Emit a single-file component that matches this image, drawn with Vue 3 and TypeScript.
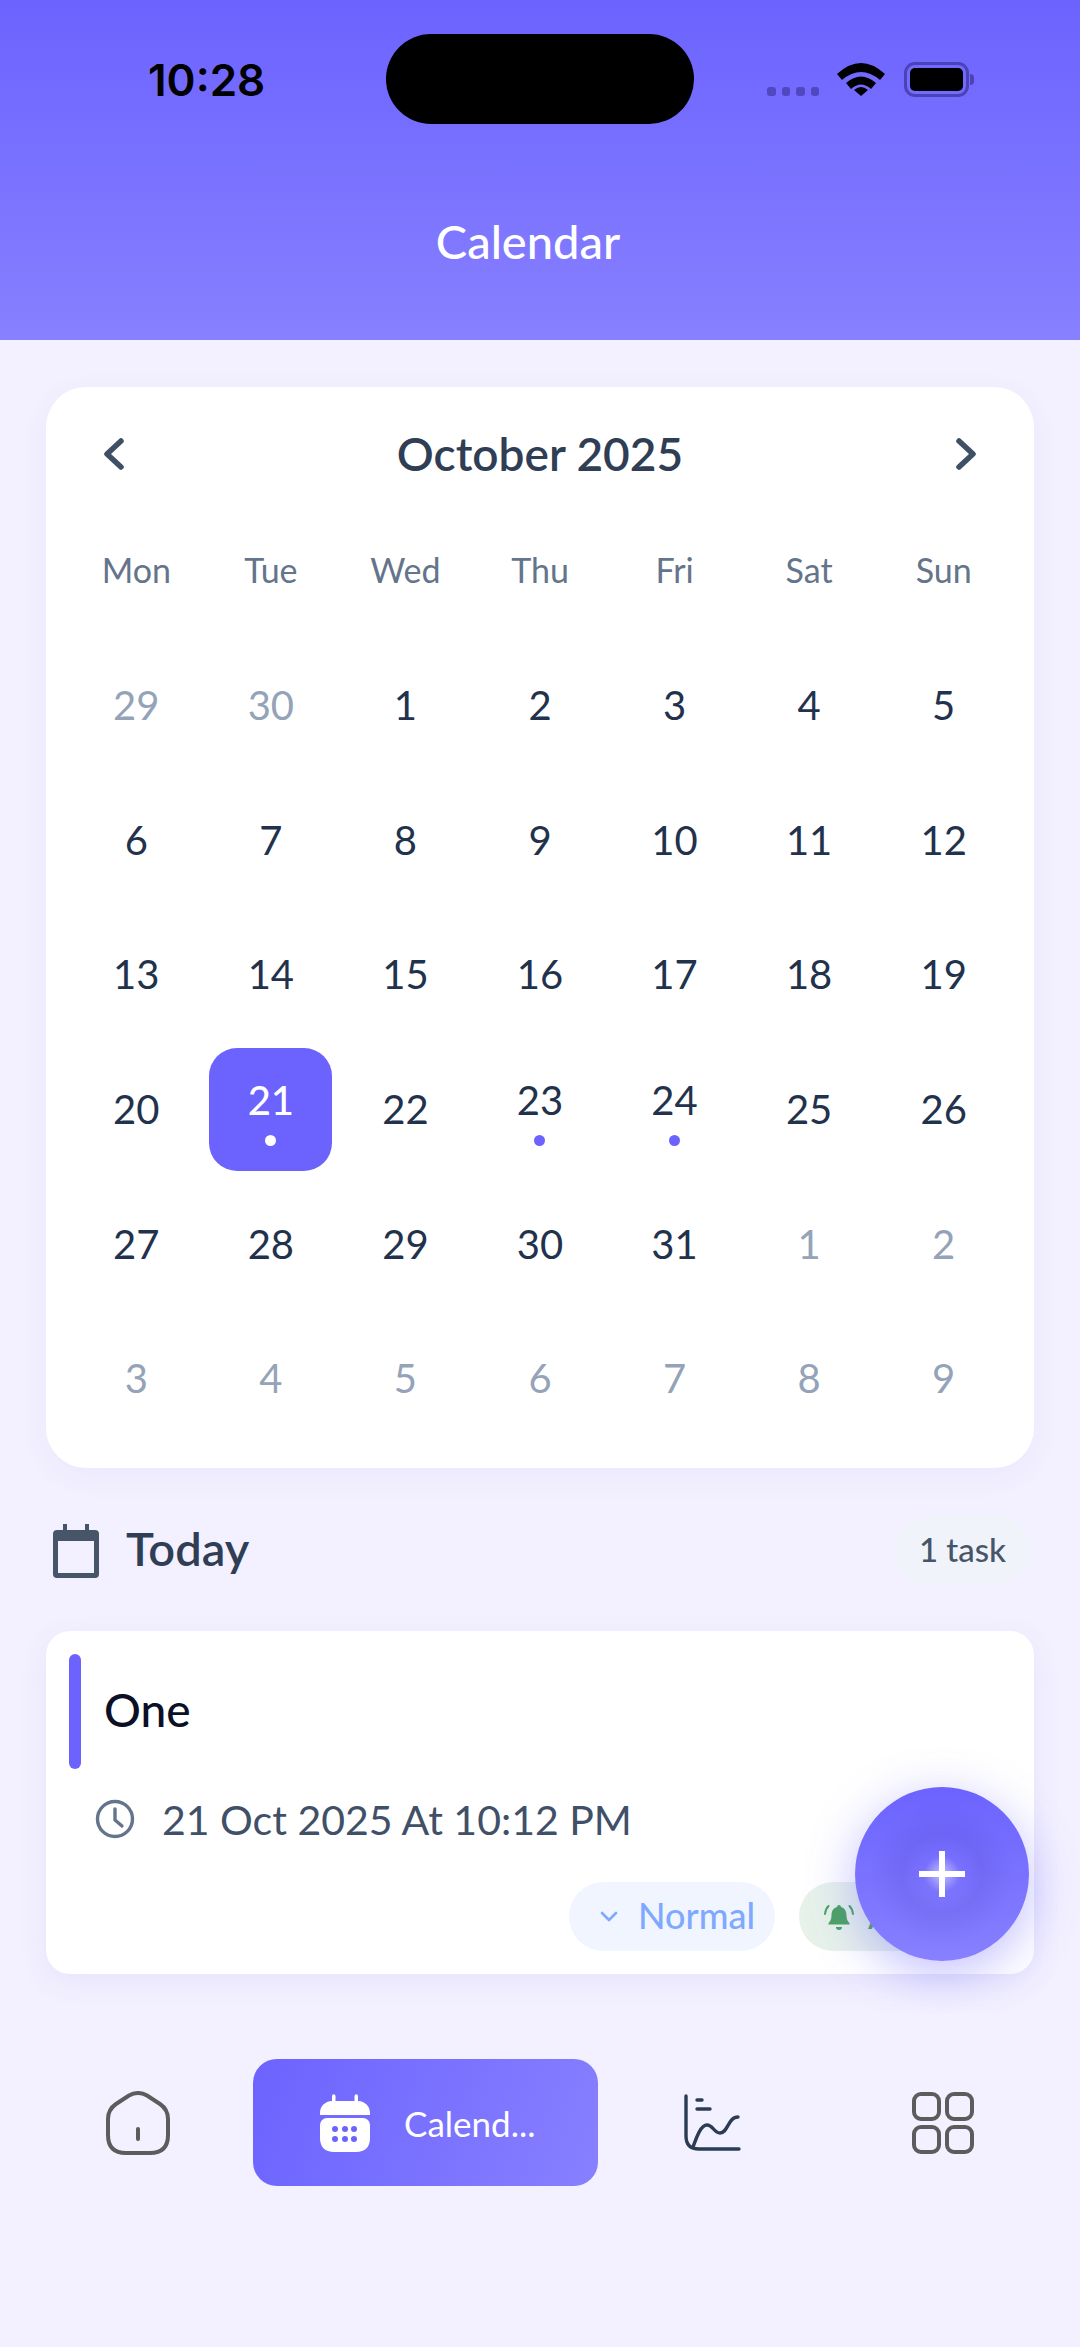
<script setup lang="ts">
interface Day { n: number; muted?: boolean; dot?: boolean; sel?: boolean }
const weekdays = ['Mon', 'Tue', 'Wed', 'Thu', 'Fri', 'Sat', 'Sun']
const days: Day[] = []
for (const n of [29, 30]) days.push({ n, muted: true })
for (let n = 1; n <= 31; n++) days.push({ n, dot: n === 21 || n === 23 || n === 24, sel: n === 21 })
for (let n = 1; n <= 9; n++) days.push({ n, muted: true })
</script>

<template>
  <div class="page">
    <header class="header">
      <div class="status">
        <span class="time">10:28</span>
        <div class="island"></div>
        <div class="sysicons">
          <div class="dots"><i></i><i></i><i></i><i></i></div>
          <svg class="wifi" width="48" height="34" viewBox="0 0 48 34">
            <path d="M0 12 Q24 -10 48 12 L43 18 Q24 2 5 18Z" fill="#000"/>
            <path d="M9 21 Q24 8 39 21 L34 27 Q24 18 14 27Z" fill="#000"/>
            <path d="M17 29 Q24 23 31 29 L24 35Z" fill="#000" transform="translate(0 -1)"/>
          </svg>
          <div class="battery"><div class="cell"></div></div>
          <div class="nub"></div>
        </div>
      </div>
      <h1 class="title">Calendar</h1>
    </header>

    <main class="scroll">
      <section class="calendar">
        <div class="cal-head">
          <svg width="28" height="36" viewBox="0 0 28 36" fill="none" stroke="#3f4f66" stroke-width="5.500" stroke-linecap="round" stroke-linejoin="round"><path d="M21 5 L7 18 L21 31"/></svg>
          <h2 class="month">October 2025</h2>
          <svg width="28" height="36" viewBox="0 0 28 36" fill="none" stroke="#3f4f66" stroke-width="5.500" stroke-linecap="round" stroke-linejoin="round"><path d="M7 5 L21 18 L7 31"/></svg>
        </div>
        <div class="grid">
          <div v-for="w in weekdays" :key="w" class="wd">{{ w }}</div>
          <div v-for="(d, i) in days" :key="i" class="cell-day">
            <div class="day" :class="{ muted: d.muted, sel: d.sel }">
              <span>{{ d.n }}</span>
              <i v-if="d.dot" class="mark"></i>
            </div>
          </div>
        </div>
      </section>

      <div class="today-row">
        <svg class="today-ic" width="50" height="54" viewBox="0 0 50 54">
          <path d="M12 0h4v6h18V0h4v6h6a4 4 0 0 1 4 4v40a4 4 0 0 1-4 4H6a4 4 0 0 1-4-4V10a4 4 0 0 1 4-4h6zM7 17v32h36V17z" fill="#475569" fill-rule="evenodd"/>
        </svg>
        <span class="today">Today</span>
        <span class="count">1 task</span>
      </div>

      <article class="task">
        <div class="task-top">
          <div class="bar"></div>
          <span class="task-name">One</span>
        </div>
        <div class="when">
          <svg width="40" height="40" viewBox="0 0 40 40" fill="none" stroke="#64748b" stroke-width="3.4" stroke-linecap="round" stroke-linejoin="round"><circle cx="20" cy="20" r="17.5"/><path d="M20 10v11l7 6"/></svg>
          <span>21 Oct 2025 At 10:12 PM</span>
        </div>
        <div class="pills">
          <div class="pill normal">
            <svg width="18" height="12" viewBox="0 0 18 12" fill="none" stroke="#7fa9ff" stroke-width="2.6" stroke-linecap="round" stroke-linejoin="round"><path d="M2 2l7 7 7-7"/></svg>
            <span>Normal</span>
          </div>
          <div class="pill alarm">
            <svg width="30" height="30" viewBox="0 0 30 30">
              <path d="M15 3a2 2 0 0 1 2 2c4 1 5.500 4.500 5.500 8.500 0 4 1.500 6 3 7.500v1.500h-21V21c1.500-1.500 3-3.500 3-7.500S9 6 13 5a2 2 0 0 1 2-2z" fill="#4ba35f"/>
              <path d="M12 25h6a3 3 0 0 1-6 0z" fill="#4ba35f"/>
              <path d="M4.500 4Q1.500 7 1 12M25.500 4Q28.500 7 29 12" stroke="#4ba35f" stroke-width="2" fill="none" stroke-linecap="round"/>
            </svg>
            <span>Alarm</span>
          </div>
        </div>
      </article>
      <button class="fab" aria-label="Add">
        <svg width="46" height="46" viewBox="0 0 46 46" fill="none" stroke="#fff" stroke-width="6"><path d="M23 0v46M0 23h46"/></svg>
      </button>
    </main>

    <nav class="nav">
      <div class="nav-item home">
        <svg width="64" height="64" viewBox="0 0 64 64" fill="none" stroke="#5c5c5c" stroke-width="4" stroke-linecap="round" stroke-linejoin="round">
          <path d="M23 4.500 Q32 -0.500 41 4.500 L54 13 Q62 18.500 62 28 V44 Q62 62 44 62 H20 Q2 62 2 44 V28 Q2 18.500 10 13Z"/>
          <path d="M32 38v10"/>
        </svg>
      </div>
      <div class="nav-item active">
        <svg width="50" height="58" viewBox="0 0 50 58">
          <path d="M12 2a1.500 1.500 0 0 1 3.500 0v5h19V2a1.500 1.500 0 0 1 3.500 0v5c7 .5 12 5 12 12v2H0v-2C0 12 5 7.500 12 7z" fill="#fff"/>
          <path d="M0 31a7 7 0 0 1 7-7h36a7 7 0 0 1 7 7v13c0 9-5 14-14 14H14C5 58 0 53 0 44z" fill="#fff"/>
          <g fill="#6c63ff"><circle cx="15" cy="35" r="3"/><circle cx="25" cy="35" r="3"/><circle cx="34" cy="35" r="3"/><circle cx="15" cy="45" r="3"/><circle cx="25" cy="45" r="3"/><circle cx="34" cy="45" r="3"/></g>
        </svg>
        <span>Calend...</span>
      </div>
      <div class="nav-item">
        <svg width="58" height="58" viewBox="0 0 58 58" fill="none" stroke="#2b3c55" stroke-width="3.400" stroke-linecap="round" stroke-linejoin="round">
          <path d="M2 2V42Q2 55 15 55H55"/>
          <path d="M9 53C13 42 17 31 23 31C29 31 30 39 36 39C44 39 44 23 54 23"/>
          <path d="M13 6h5M13 15h13"/>
        </svg>
      </div>
      <div class="nav-item">
        <svg width="62" height="62" viewBox="0 0 62 62" fill="none" stroke="#5c5c5c" stroke-width="4">
          <rect x="2" y="2" width="25" height="25" rx="7"/><rect x="35" y="2" width="25" height="25" rx="7"/>
          <rect x="2" y="35" width="25" height="25" rx="7"/><rect x="35" y="35" width="25" height="25" rx="7"/>
        </svg>
      </div>
    </nav>
  </div>
</template>

<style>
html, body { margin: 0; background: #f3f1ff; }
</style>

<style scoped>
.page {
  width: 1080px;
  height: 2347px;
  background: #f3f1ff;
  font-family: "Lato", "Noto Sans", sans-serif;
  overflow: hidden;
  display: flex;
  flex-direction: column;
}
.header {
  height: 340px;
  box-sizing: border-box;
  background: linear-gradient(180deg, #6c63ff, #8780ff);
  display: flex;
  flex-direction: column;
  align-items: center;
}
.status {
  width: 100%;
  height: 124px;
  margin-top: 34px;
  box-sizing: border-box;
  padding-left: 148px;
  display: flex;
  align-items: flex-start;
}
.time {
  font-family: "Inter", sans-serif;
  font-weight: 600;
  font-size: 44px;
  line-height: 46px;
  margin-top: 23px;
  width: 238px;
  color: #000;
}
.island { width: 308px; height: 90px; border-radius: 45px; background: #000; }
.sysicons { display: flex; align-items: flex-start; margin-left: 73px; margin-top: 28px; }
.dots { display: flex; gap: 6px; margin-top: 25px; margin-right: 18px; }
.dots i { width: 8.500px; height: 9px; border-radius: 3px; background: #4f48c0; }
.wifi { margin-right: 19px; }
.battery { width: 65px; height: 35px; box-sizing: border-box; border: 3px solid #4a43b5; border-radius: 11px; padding: 3px; }
.cell { height: 100%; background: #000; border-radius: 5px; }
.nub { width: 4px; height: 11px; margin-top: 12px; margin-left: 1px; background: #4a43b5; border-radius: 0 4px 4px 0; }
.title {
  margin: 58px 0 0 -24px;
  font-size: 47px;
  line-height: 50px;
  font-weight: 500;
  color: #fff;
}
.scroll {
  position: relative;
  height: 1673px;
  padding: 47px 46px 0;
  box-sizing: border-box;
  overflow: hidden;
}
.calendar {
  height: 1081px;
  box-sizing: border-box;
  background: #fff;
  border-radius: 40px;
  padding: 45px 23px 0;
  box-shadow: 0 8px 30px rgba(90, 80, 200, 0.06);
}
.cal-head {
  display: flex;
  justify-content: space-between;
  align-items: center;
  height: 44px;
  padding: 0 31px;
}
.month { margin: 0; font-size: 46px; line-height: 44px; font-weight: 600; color: #2f3e55; }
.grid {
  margin-top: 27px;
  display: grid;
  grid-template-columns: repeat(7, 1fr);
  grid-auto-rows: 134.700px;
}
.wd {
  grid-row: 1;
  height: 134.700px;
  display: flex;
  align-items: flex-start;
  justify-content: center;
  padding-top: 46px;
  box-sizing: border-box;
  font-size: 34px;
  line-height: 42px;
  color: #64748b;
}
.cell-day { display: flex; align-items: center; justify-content: center; }
.day {
  width: 123px;
  height: 123px;
  border-radius: 28px;
  display: flex;
  flex-direction: column;
  align-items: center;
  justify-content: center;
  position: relative;
  font-size: 40px;
  line-height: 46px;
  color: #22324c;
}
.day.muted { color: #94a3b8; }
.day.sel { background: #6c63ff; color: #fff; font-weight: 500; }
.mark {
  width: 11px;
  height: 11px;
  border-radius: 50%;
  background: #6c63ff;
  margin-top: 12px;
  margin-bottom: -4px;
}
.sel .mark { background: #fff; }
.today-row {
  display: flex;
  align-items: center;
  height: 69px;
  margin-top: 48px;
  padding-left: 5px;
}
.today-ic { margin-right: 25px; }
.today { font-size: 47px; font-weight: 600; color: #2f3e55; flex: 1; margin-top: -5px; }
.count {
  width: 135px;
  height: 69px;
  line-height: 66px;
  text-align: center;
  font-size: 33px;
  font-weight: 500;
  color: #475569;
  background: #f1f3fb;
  border-radius: 34px;
  margin-right: 4px;
}
.task {
  margin-top: 46px;
  height: 343px;
  box-sizing: border-box;
  background: #fff;
  border-radius: 24px;
  padding: 23px;
  box-shadow: 0 8px 30px rgba(90, 80, 200, 0.08);
  position: relative;
}
.task-top { display: flex; align-items: center; gap: 23px; height: 115px; }
.bar { width: 12px; height: 115px; border-radius: 6px; background: #6c63ff; }
.task-name { font-size: 46px; font-weight: 500; color: #0b1026; margin-top: -5px; }
.when {
  display: flex;
  align-items: center;
  gap: 27px;
  margin-top: 30px;
  padding-left: 26px;
  height: 40px;
  font-size: 41px;
  color: #3f5068;
}
.pills {
  position: absolute;
  top: 251px;
  left: 523px;
  display: flex;
  gap: 24px;
}
.pill {
  height: 69px;
  border-radius: 35px;
  display: flex;
  align-items: center;
  box-sizing: border-box;
  font-size: 36px;
  font-weight: 500;
}
.pill span { margin-top: -3px; }
.normal { width: 206px; background: #f1f5ff; color: #7fa9ff; gap: 20px; padding-left: 31px; }
.alarm { width: 190px; background: #e7f2ea; color: #4ba35f; gap: 14px; padding-left: 25px; }
.fab {
  position: absolute;
  left: 855px;
  top: 1447px;
  width: 174px;
  height: 174px;
  border: 0;
  padding: 0;
  border-radius: 50%;
  display: flex;
  align-items: center;
  justify-content: center;
  background: radial-gradient(circle at 50% 50%, rgba(255,255,255,.55) 0, rgba(255,255,255,0) 18px, rgba(60,50,170,.12) 40px, rgba(60,50,170,0) 72px), linear-gradient(180deg, #6c63ff, #8780ff);
  box-shadow: 0 12px 50px rgba(108, 99, 255, 0.42);
}
.nav {
  flex: 1;
  display: grid;
  grid-template-columns: 253px 345px 230px 230px;
  grid-template-rows: 127px;
  padding-top: 46px;
  box-sizing: border-box;
}
.nav-item { display: flex; align-items: center; justify-content: center; }
.nav-item.home { padding-left: 23px; }
.nav-item.active {
  background: linear-gradient(110deg, #6c63ff, #8780ff);
  border-radius: 24px;
  gap: 34px;
  color: #fff;
  font-size: 35px;
  justify-content: flex-start;
  padding-left: 67px;
}
</style>
